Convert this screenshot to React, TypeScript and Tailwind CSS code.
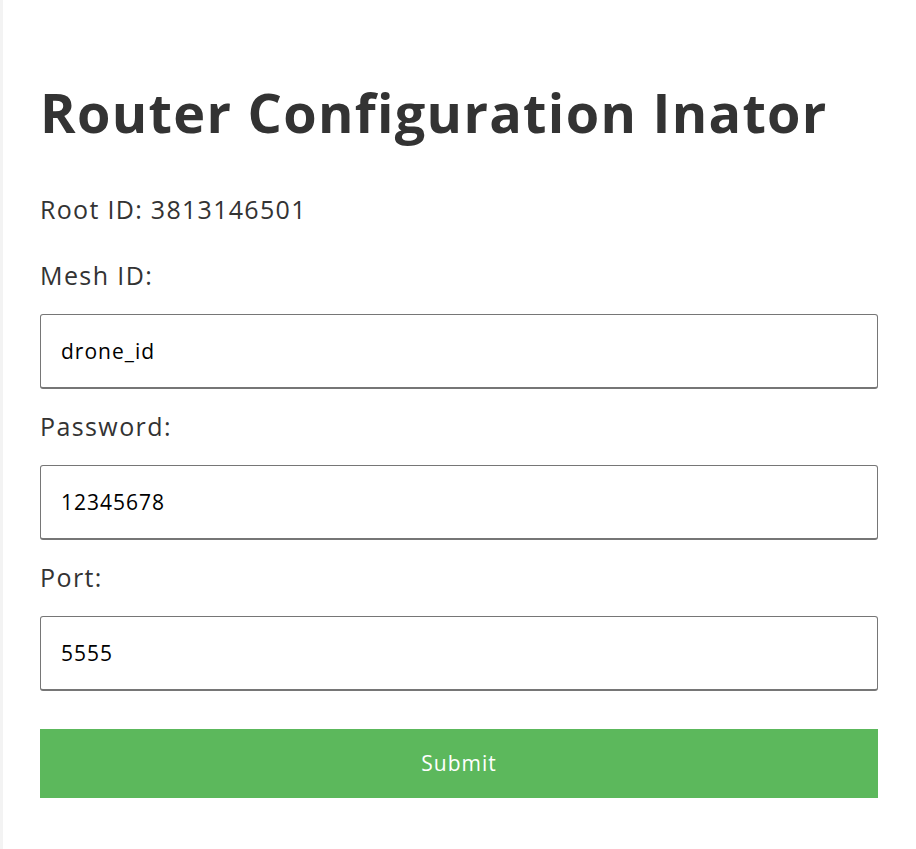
import React from "react";

const fields = [
  { label: "Mesh ID:", value: "drone_id" },
  { label: "Password:", value: "12345678" },
  { label: "Port:", value: "5555" },
];

const App = () => {
  return (
    <div className="min-h-screen bg-white border-l-[3px] border-[#f3f3f3] font-['Open_Sans',sans-serif] text-[#333333]">
      <div className="pl-[37px] pr-[38px] pt-[80px]">
        {/* Title */}
        <h1 className="text-[54px] leading-[64px] font-bold tracking-[1.3px]">Router Configuration Inator</h1>
        <p className="mt-[47px] text-[25px] leading-[36px] tracking-[1.3px]">Root ID: 3813146501</p>

        {/* Form */}
        <form className="flex flex-col" onSubmit={(e) => e.preventDefault()}>
          {fields.map((f, i) => (
            <div key={f.label} className="flex flex-col">
              <label
                className={
                  i === 0
                    ? "mt-[30px] text-[25px] leading-[36px] tracking-[1.4px]"
                    : "mt-[19px] text-[25px] leading-[36px] tracking-[1.4px]"
                }
              >
                {f.label}
              </label>
              <input
                defaultValue={f.value}
                className="mt-[21px] h-[75px] w-full rounded-[3px] border border-b-2 border-[#767676] bg-white px-5 text-[21px] tracking-[1px] text-black font-['Open_Sans',sans-serif] outline-none"
              />
            </div>
          ))}
          <button
            type="submit"
            className="mt-[38px] h-[69px] w-full bg-[#5cb85c] text-[21px] tracking-[1px] text-white"
          >
            Submit
          </button>
        </form>
      </div>
    </div>
  );
};

export default App;
